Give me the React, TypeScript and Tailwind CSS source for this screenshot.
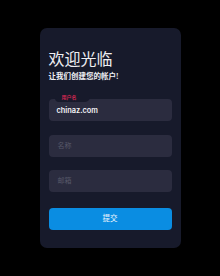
import React from "react";

export default function App() {
  return (
    <div className="w-[220px] h-[276px] bg-black flex items-center justify-center" style={{ fontFamily: '"Noto Sans", "Noto Sans CJK SC", sans-serif' }}>
      <div className="w-[141px] h-[220px] bg-[#171a2b] rounded-[7px] px-[9px] pt-[23px] flex flex-col">
        <h1 className="text-[16px] leading-[18px] text-[#eeeef2] font-normal" style={{ fontFamily: 'serif, "Noto Sans CJK SC"' }}>欢迎光临</h1>
        <p className="mt-[3px] text-[7.5px] leading-[9px] font-bold text-[#f1f1f5]" style={{ fontFamily: 'serif, "Noto Sans CJK SC"' }}>让我们创建您的帐户!</p>
        <div className="relative mt-[18px] h-[22px] rounded-[4px] bg-[#2b2c3f] flex items-center pl-[8px]">
          <div className="absolute left-[6px] top-[-5px] h-[7.5px] w-[35px] pl-[7px] bg-[#171a2b] rounded-br-[5px] rounded-bl-[4px]">
            <span className="block text-[5px] leading-[6px] text-[#cf2650] font-bold">用户名</span>
          </div>
          <span className="text-[7.4px] text-[#f2f2f5] font-semibold mt-[1px]" style={{ fontFamily: 'Inter, sans-serif' }}>chinaz.com</span>
        </div>
        <div className="mt-[14px] h-[22px] rounded-[4px] bg-[#2b2c3f] flex items-center pl-[9px]">
          <span className="text-[7px] text-[#575869]">名称</span>
        </div>
        <div className="mt-[13px] h-[22px] rounded-[4px] bg-[#2b2c3f] flex items-center pl-[9px]">
          <span className="text-[7px] text-[#575869]">邮箱</span>
        </div>
        <div className="mt-[16px] h-[22px] rounded-[4px] bg-[#0a8de2] flex items-center justify-center">
          <span className="text-[7.5px] text-[#eef6fd]">提交</span>
        </div>
      </div>
    </div>
  );
}
